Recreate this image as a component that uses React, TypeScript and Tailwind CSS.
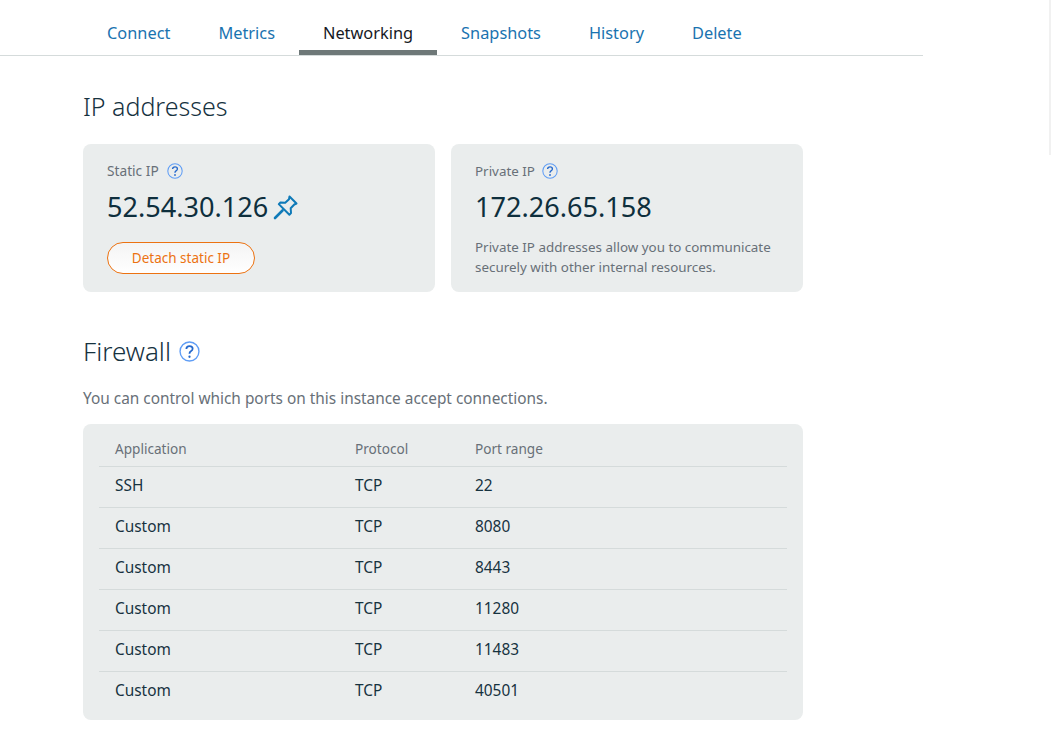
const rows = [
  ["SSH", "TCP", "22"],
  ["Custom", "TCP", "8080"],
  ["Custom", "TCP", "8443"],
  ["Custom", "TCP", "11280"],
  ["Custom", "TCP", "11483"],
  ["Custom", "TCP", "40501"],
];
const tabs = ["Connect", "Metrics", "Networking", "Snapshots", "History", "Delete"];

function Help({ big }: { big?: boolean }) {
  return (
    <svg viewBox="0 0 20 20" className={big ? "w-[21px] h-[21px]" : "w-4 h-4"} fill="none">
      <circle cx="10" cy="10" r="9" stroke="#5f9df5" strokeWidth="1.3" />
      <path d="M7 7.6C7.1 5.9 8.4 4.9 10 4.9c1.7 0 3 1 3 2.5 0 1.3-.9 1.9-1.7 2.4-.8.5-1.3 1-1.3 2v.4" stroke="#2468cc" strokeWidth="1.7" />
      <circle cx="10" cy="15" r="1.1" fill="#2468cc" />
    </svg>
  );
}

function Pin() {
  return (
    <svg viewBox="0 0 26 26" className="w-[26px] h-[26px] ml-[5px]" fill="none" stroke="#0f7ab8" strokeWidth="2" strokeLinejoin="round" strokeLinecap="round">
      <path d="M16.5 2.5l7 7-2.2 1-3.6 3.8.3 4.8-1.6 1.6-10.6-10.6 1.6-1.6 4.8.3 3.8-3.6z" />
      <path d="M2 24l7.5-7.5" strokeWidth="2.6" />
    </svg>
  );
}

export default function App() {
  return (
    <div className="relative w-[1051px] h-[730px] overflow-hidden bg-white text-[#16323f] font-['Noto_Sans',sans-serif]">
      <div className="absolute right-0 top-0 w-[2px] h-[155px] bg-[#f1f1f1]" />
      <div className="w-[923px] h-14 border-b border-[#d5dbdb] flex pl-[83px]">
        {tabs.map((t) => (
          <div
            key={t}
            className={
              t === "Networking"
                ? "h-[55px] px-6 flex items-center pt-4 text-[16.35px] text-[#16191f] border-b-[5px] border-[#6e7878]"
                : "h-[55px] px-6 flex items-center pt-4 text-[16.35px] text-[#1a73b0] border-b-[5px] border-transparent"
            }
          >
            {t}
          </div>
        ))}
      </div>
      <div className="pl-[83px] w-[803px] box-content">
        <h2 className="mt-[30px] text-[25px] leading-[40px] font-light text-[#16323f]">IP addresses</h2>
        <div className="mt-[18px] flex gap-4">
          <div className="w-[352px] h-[148px] rounded-lg bg-[#eaeded] pl-6 pt-[17px]">
            <div className="flex items-center gap-[8px] text-[13.7px] leading-5 text-[#687078]">
              Static IP <Help />
            </div>
            <div className="mt-[6px] flex items-center text-[27.1px] leading-[40px] text-[#0e2f3d]">
              52.54.30.126 <Pin />
            </div>
            <button className="mt-[15px] w-[148px] h-8 rounded-full border border-[#ec7211] bg-gradient-to-b from-[#f4f4f4] to-white text-[13.5px] text-[#ec7211]">
              Detach static IP
            </button>
          </div>
          <div className="w-[352px] h-[148px] rounded-lg bg-[#eaeded] pl-6 pt-[17px]">
            <div className="flex items-center gap-[7px] text-[13.4px] leading-5 text-[#687078]">
              Private IP <Help />
            </div>
            <div className="mt-[6px] text-[27.1px] leading-[40px] text-[#0e2f3d]">172.26.65.158</div>
            <p className="mt-[10px] text-[13.4px] leading-[20px] text-[#687078] w-[310px]">
              Private IP addresses allow you to communicate securely with other internal resources.
            </p>
          </div>
        </div>
        <h2 className="mt-[39px] flex items-center gap-[8px] text-[26px] leading-[40px] font-light text-[#16323f]">
          Firewall <Help big />
        </h2>
        <p className="mt-[18px] text-[15.4px] leading-5 text-[#687078]">
          You can control which ports on this instance accept connections.
        </p>
        <div className="mt-[15px] w-[720px] rounded-lg bg-[#eaeded] px-4 pb-[8px]">
          <div className="grid grid-cols-[240px_120px_1fr] pl-4 h-[42px] items-center pt-[8px] text-[13.6px] text-[#687078]">
            <span>Application</span><span>Protocol</span><span>Port range</span>
          </div>
          {rows.map((r, i) => (
            <div key={i} className="grid grid-cols-[240px_120px_1fr] pl-4 h-[41px] items-center pb-[3px] border-t border-[#d5dbdb] text-[15.4px] text-[#16323f]">
              <span>{r[0]}</span><span>{r[1]}</span><span>{r[2]}</span>
            </div>
          ))}
        </div>
      </div>
    </div>
  );
}
